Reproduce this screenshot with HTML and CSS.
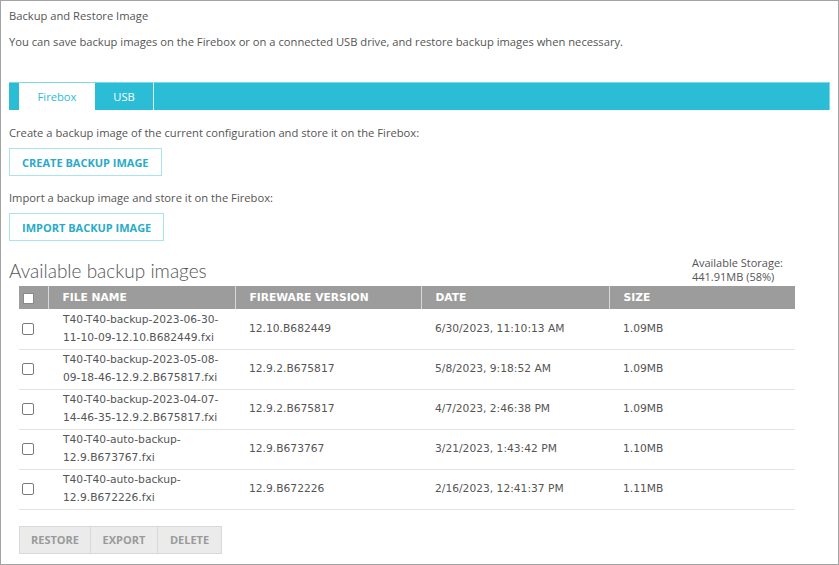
FILE: index.html
```html
<!DOCTYPE html>
<html lang="en">
  <head>
    <meta charset="UTF-8" />
    <title>Backup and Restore Image</title>
    <link rel="stylesheet" href="styles.css">
  </head>
  <body>
    <div class="page">
      <h1 class="title">Backup and Restore Image</h1>
      <p class="intro">You can save backup images on the Firebox or on a connected USB drive, and restore backup images when necessary.</p>

      <nav class="tabs">
        <a href="#" class="tab active">Firebox</a>
        <a href="#" class="tab">USB</a>
      </nav>

      <p class="hint">Create a backup image of the current configuration and store it on the Firebox:</p>
      <button class="btn-outline">CREATE BACKUP IMAGE</button>

      <p class="hint">Import a backup image and store it on the Firebox:</p>
      <button class="btn-outline">IMPORT BACKUP IMAGE</button>

      <div class="list-head">
        <h2>Available backup images</h2>
        <div class="storage">Available Storage:<br>441.91MB (58%)</div>
      </div>

      <table class="images">
        <thead>
          <tr>
            <th class="check"><span class="box"></span></th>
            <th class="col-name">FILE NAME</th>
            <th class="col-fw">FIREWARE VERSION</th>
            <th class="col-date">DATE</th>
            <th>SIZE</th>
          </tr>
        </thead>
        <tbody>
          <tr>
            <td class="check"><span class="box"></span></td>
            <td>T40-T40-backup-2023-06-30-<br>11-10-09-12.10.B682449.fxi</td>
            <td>12.10.B682449</td>
            <td>6/30/2023, 11:10:13 AM</td>
            <td>1.09MB</td>
          </tr>
          <tr>
            <td class="check"><span class="box"></span></td>
            <td>T40-T40-backup-2023-05-08-<br>09-18-46-12.9.2.B675817.fxi</td>
            <td>12.9.2.B675817</td>
            <td>5/8/2023, 9:18:52 AM</td>
            <td>1.09MB</td>
          </tr>
          <tr>
            <td class="check"><span class="box"></span></td>
            <td>T40-T40-backup-2023-04-07-<br>14-46-35-12.9.2.B675817.fxi</td>
            <td>12.9.2.B675817</td>
            <td>4/7/2023, 2:46:38 PM</td>
            <td>1.09MB</td>
          </tr>
          <tr>
            <td class="check"><span class="box"></span></td>
            <td>T40-T40-auto-backup-<br>12.9.B673767.fxi</td>
            <td>12.9.B673767</td>
            <td>3/21/2023, 1:43:42 PM</td>
            <td>1.10MB</td>
          </tr>
          <tr>
            <td class="check"><span class="box"></span></td>
            <td>T40-T40-auto-backup-<br>12.9.B672226.fxi</td>
            <td>12.9.B672226</td>
            <td>2/16/2023, 12:41:37 PM</td>
            <td>1.11MB</td>
          </tr>
        </tbody>
      </table>

      <div class="actions">
        <button class="btn-gray restore">RESTORE</button>
        <button class="btn-gray export">EXPORT</button>
        <button class="btn-gray delete">DELETE</button>
      </div>
    </div>
  </body>
</html>
```

FILE: styles.css
```css
html, body {
  margin: 0;
  padding: 0;
  background: #fff;
}
.page {
  box-sizing: border-box;
  width: 839px;
  height: 565px;
  border: 1px solid #a3a3a3;
  padding: 6px 8px 0 8px;
  font-family: "Open Sans", sans-serif;
  font-size: 11.2px;
  color: #555;
}
.title {
  font-size: 11.2px;
  font-weight: normal;
  line-height: 18px;
  margin: 0;
}
p {
  margin: 0;
}
.intro {
  margin-top: 8px;
  line-height: 18px;
}

/************************
  TABS
************************/
.tabs {
  display: flex;
  box-sizing: border-box;
  margin-top: 31px;
  height: 28px;
  padding-left: 10px;
  background-color: #2bbcd6;
  border-top: 1px solid #7fd8e8;
  border-right: 1px solid #7fd8e8;
}
.tab {
  display: block;
  width: 58px;
  line-height: 27px;
  color: #fff;
  text-align: center;
  text-decoration: none;
  border-right: 1px solid #e6f7fa;
}
.tab.active {
  width: 76px;
  background: #fff;
  color: #2bbcd6;
  border-right: none;
}

/************************
  BUTTONS
************************/
.hint {
  margin-top: 14px;
  line-height: 18px;
}
.btn-outline + .hint {
  margin-top: 13px;
}
.btn-outline {
  display: block;
  height: 28px;
  margin-top: 6px;
  padding: 0 12px;
  background: #fff;
  border: 1px solid #a8e3ee;
  color: #29abc9;
  font-family: "Open Sans", sans-serif;
  font-weight: bold;
  font-size: 11px;
}

/************************
  TABLE
************************/
.list-head {
  display: flex;
  justify-content: space-between;
  align-items: flex-end;
  width: 786px;
  margin-top: 15px;
}
.list-head h2 {
  margin: 0;
  padding-bottom: 3px;
  font-family: "Lato", sans-serif;
  font-weight: 300;
  font-size: 19px;
  line-height: 24px;
  color: #555;
}
.storage {
  width: 103px;
  padding-bottom: 2px;
  font-size: 11px;
  line-height: 14px;
}
.images {
  table-layout: fixed;
  width: 776px;
  margin-left: 10px;
  border-collapse: collapse;
  font-family: "DejaVu Sans", sans-serif;
  font-size: 10.7px;
  color: #555;
}
.images th,
.images td {
  box-sizing: border-box;
  padding: 0 0 0 14px;
  text-align: left;
}
.images th {
  height: 23px;
  background: #9c9c9c;
  color: #fff;
  font-size: 10.7px;
  border-left: 1px solid #d8d8d8;
}
.images th:first-child {
  border-left: none;
}
.images .check { width: 29px; padding-left: 4px; }
.images .col-name { width: 187px; }
.images .col-fw { width: 186px; }
.images .col-date { width: 188px; }
.images td {
  height: 40px;
  line-height: 18px;
  border-bottom: 1px solid #e3e3e3;
}
.images td:nth-child(2) {
  padding-left: 15px;
}
.images td.check {
  padding-left: 3px;
}
.box {
  display: inline-block;
  box-sizing: border-box;
  width: 12px;
  height: 12px;
  vertical-align: middle;
  background: #fff;
  border: 1px solid #7a7a7a;
  border-radius: 2px;
}
th .box {
  width: 11px;
  height: 11px;
  border-color: #8a8a8a;
  border-radius: 0;
}

.actions {
  display: flex;
  margin: 16px 0 0 10px;
}
.btn-gray {
  box-sizing: border-box;
  height: 28px;
  padding: 0;
  background: #ebebeb;
  border: 1px solid #d8d8d8;
  border-left: none;
  color: #9a9a9a;
  font-family: "Open Sans", sans-serif;
  font-weight: bold;
  font-size: 11px;
}
.btn-gray:first-child {
  border-left: 1px solid #d8d8d8;
}
.restore { width: 72px; }
.export { width: 67px; }
.delete { width: 64px; }
```
